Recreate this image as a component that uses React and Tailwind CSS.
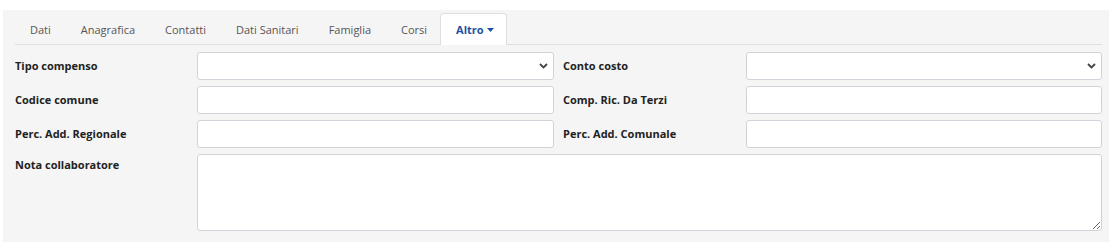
import React from "react";

const tabs = ["Dati", "Anagrafica", "Contatti", "Dati Sanitari", "Famiglia", "Corsi"];

const Chevron = () => (
  <svg
    className="pointer-events-none absolute right-[6px] top-1/2 -translate-y-1/2"
    width="9"
    height="6"
    viewBox="0 0 9 6"
  >
    <polyline points="1,1 4.5,4.5 8,1" fill="none" stroke="#444" strokeWidth="1.8" />
  </svg>
);

const Label = ({ children, className = "" }) => (
  <div className={`text-[11px] font-bold text-[#222] ${className}`}>{children}</div>
);

const Select = () => (
  <div className="relative h-[28px]">
    <select className="h-full w-full appearance-none rounded-[3px] border border-[#cfd4da] bg-white" />
    <Chevron />
  </div>
);

const Input = () => (
  <input className="h-[28px] w-full rounded-[3px] border border-[#cfd4da] bg-white" />
);

export default function App() {
  return (
    <div
      className="w-[1114px] h-[252px] bg-white pt-[10px] pl-[3px]"
      style={{ fontFamily: '"Open Sans", "Noto Sans", sans-serif' }}
    >
      <div className="w-[1106px] h-[232px] bg-[#f5f5f5] pl-[12px] pr-[7px] pt-[3px]">
        {/* Tabs */}
        <ul className="flex border-b border-[#dcdfe3]">
          {tabs.map((t) => (
            <li key={t} className="px-[14px] h-[31px] leading-[31px] text-[11px] text-[#555] border border-transparent">
              {t}
            </li>
          ))}
          <li className="-ml-[2px] -mb-px h-[32px] leading-[31px] pl-[15px] pr-[12px] text-[11px] font-bold text-[#1f4fa3] bg-white border border-b-0 border-[#dcdfe3] rounded-t-[4px] flex items-center gap-[3px]">
            Altro
            <svg width="7" height="4" viewBox="0 0 7 4">
              <polygon points="0,0 7,0 3.5,4" fill="#1f4fa3" />
            </svg>
          </li>
        </ul>

        {/* Form */}
        <div className="mt-[7px] flex flex-col gap-[6px]">
          <div className="grid grid-cols-[182px_357px_9px_183px_356px]">
            <Label className="leading-[28px]">Tipo compenso</Label>
            <Select />
            <div />
            <Label className="leading-[28px]">Conto costo</Label>
            <Select />
          </div>
          <div className="grid grid-cols-[182px_357px_9px_183px_356px]">
            <Label className="leading-[28px]">Codice comune</Label>
            <Input />
            <div />
            <Label className="leading-[28px]">Comp. Ric. Da Terzi</Label>
            <Input />
          </div>
          <div className="grid grid-cols-[182px_357px_9px_183px_356px]">
            <Label className="leading-[28px]">Perc. Add. Regionale</Label>
            <Input />
            <div />
            <Label className="leading-[28px]">Perc. Add. Comunale</Label>
            <Input />
          </div>
          <div className="grid grid-cols-[182px_1fr]">
            <Label className="leading-[22px]">Nota collaboratore</Label>
            <textarea className="h-[77px] w-full rounded-[3px] border border-[#cfd4da] bg-white" />
          </div>
        </div>
      </div>
    </div>
  );
}
